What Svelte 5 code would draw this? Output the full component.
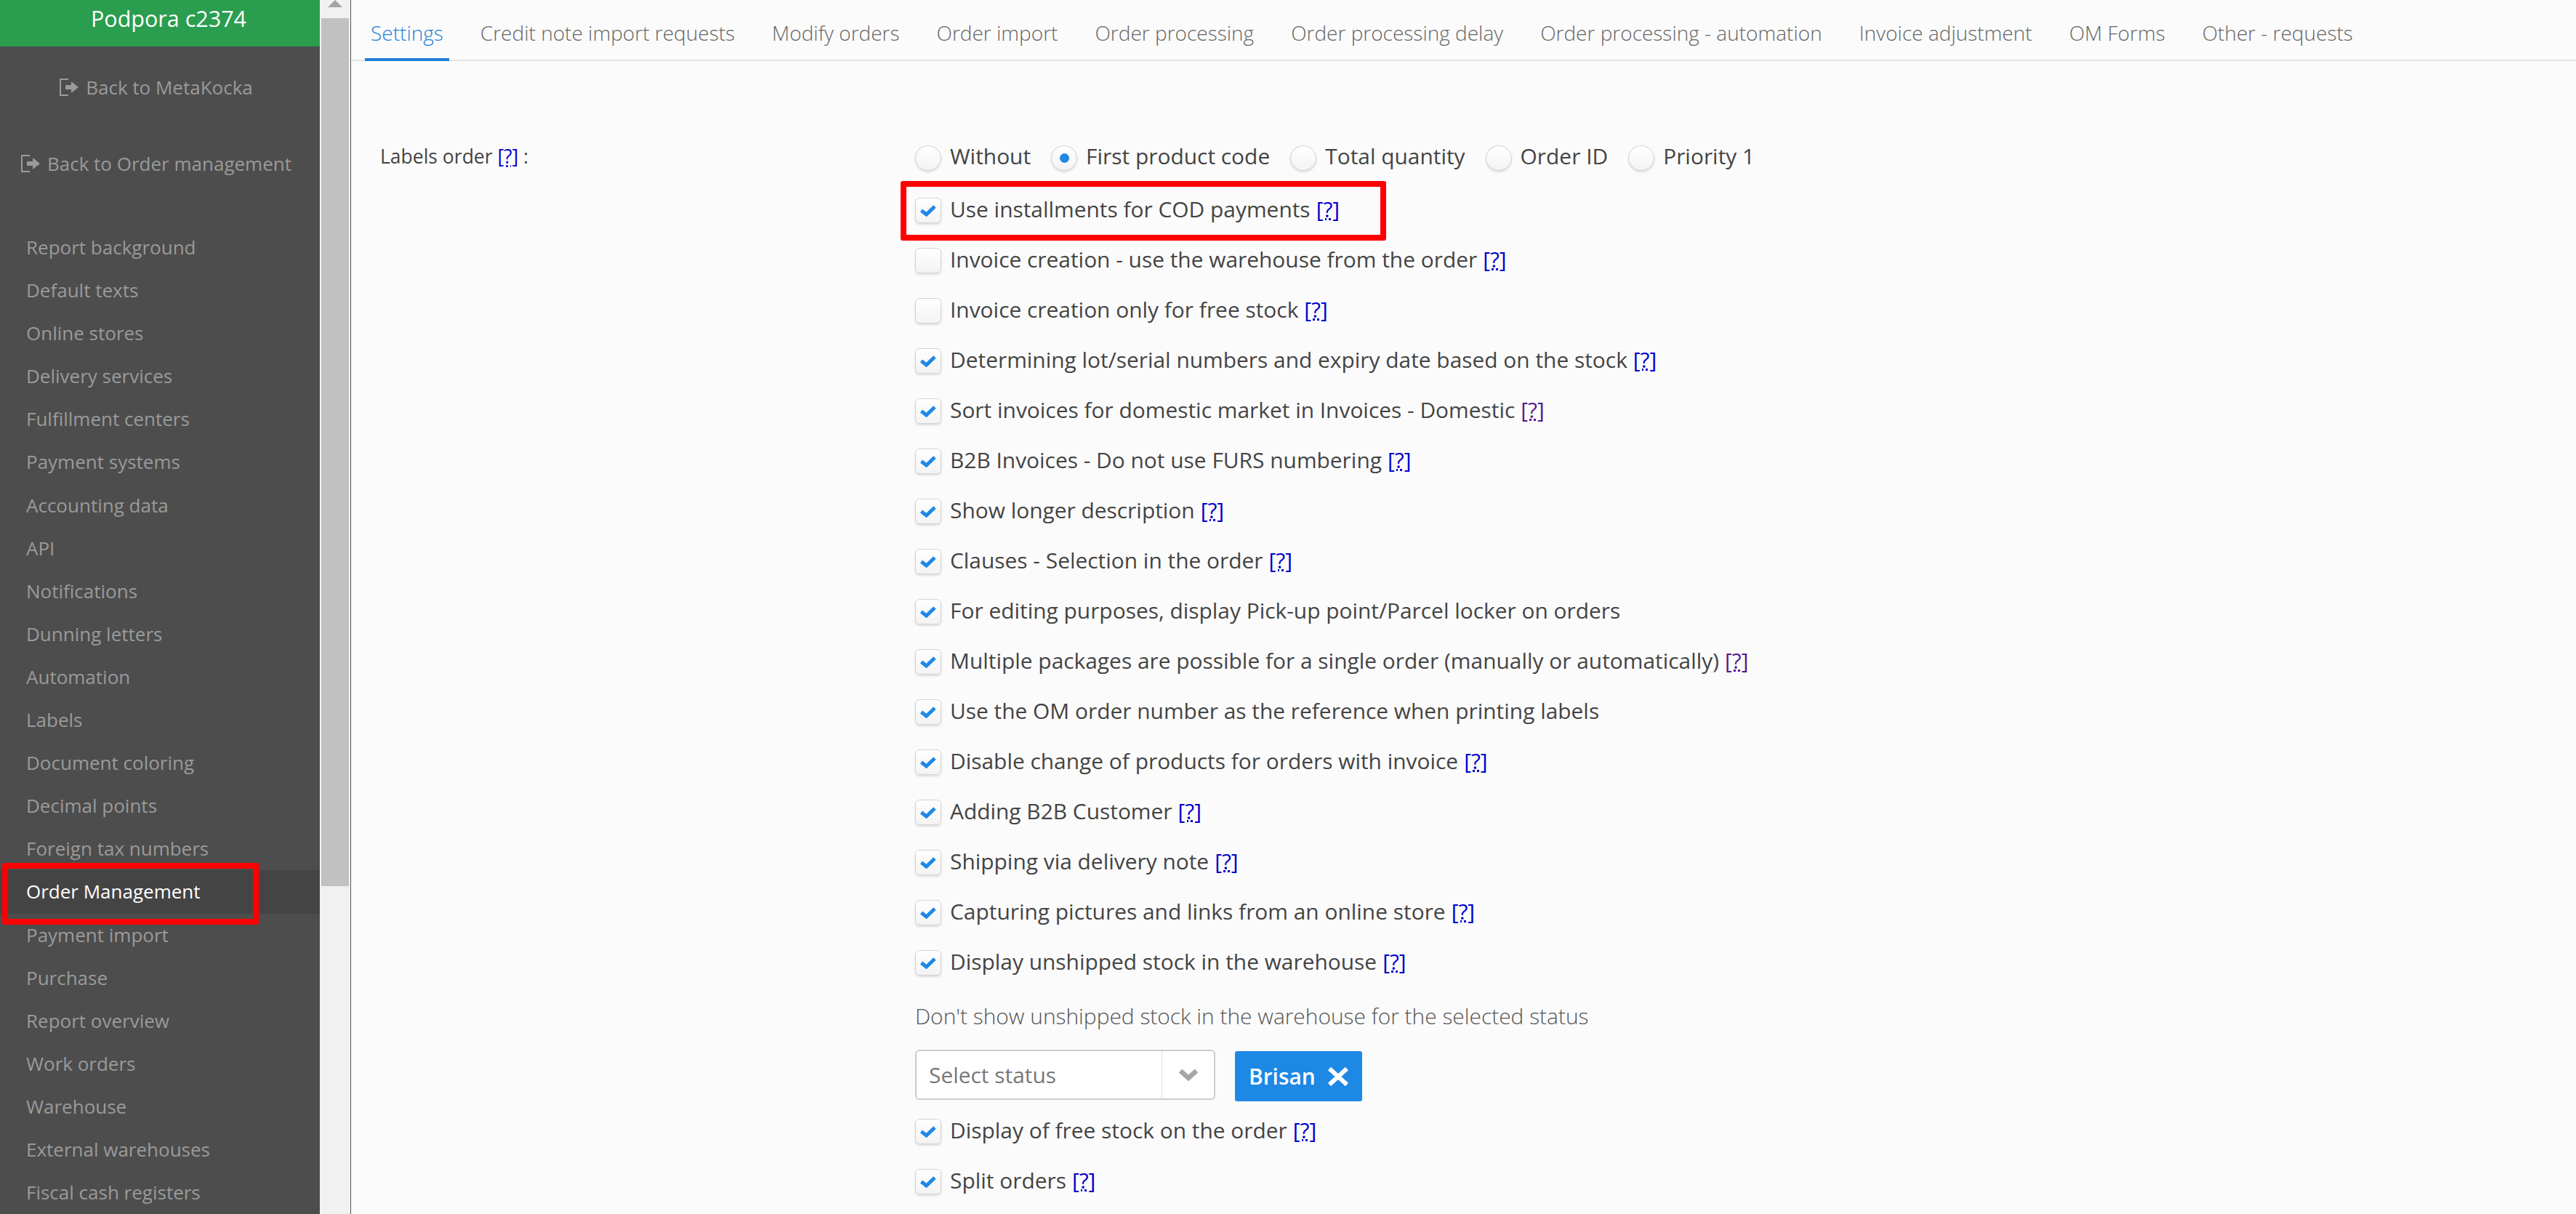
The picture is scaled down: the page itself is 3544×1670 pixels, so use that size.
<script>
  const menu = ["Report background","Default texts","Online stores","Delivery services","Fulfillment centers","Payment systems","Accounting data","API","Notifications","Dunning letters","Automation","Labels","Document coloring","Decimal points","Foreign tax numbers","Order Management","Payment import","Purchase","Report overview","Work orders","Warehouse","External warehouses","Fiscal cash registers"];
  const tabs = ["Settings","Credit note import requests","Modify orders","Order import","Order processing","Order processing delay","Order processing - automation","Invoice adjustment","OM Forms","Other - requests"];
  const radios = ["Without","First product code","Total quantity","Order ID","Priority 1"];
  // help: 0 none, 1 link, 2 visited link
  const first = [
    { t: "Use installments for COD payments", on: true, help: 1 },
    { t: "Invoice creation - use the warehouse from the order", on: false, help: 1 },
    { t: "Invoice creation only for free stock", on: false, help: 1 },
    { t: "Determining lot/serial numbers and expiry date based on the stock", on: true, help: 1 },
    { t: "Sort invoices for domestic market in Invoices - Domestic", on: true, help: 2 },
    { t: "B2B Invoices - Do not use FURS numbering", on: true, help: 1 },
    { t: "Show longer description", on: true, help: 1 },
    { t: "Clauses - Selection in the order", on: true, help: 1 },
    { t: "For editing purposes, display Pick-up point/Parcel locker on orders", on: true, help: 0 },
    { t: "Multiple packages are possible for a single order (manually or automatically)", on: true, help: 2 },
    { t: "Use the OM order number as the reference when printing labels", on: true, help: 0 },
    { t: "Disable change of products for orders with invoice", on: true, help: 1 },
    { t: "Adding B2B Customer", on: true, help: 1 },
    { t: "Shipping via delivery note", on: true, help: 1 },
    { t: "Capturing pictures and links from an online store", on: true, help: 1 },
    { t: "Display unshipped stock in the warehouse", on: true, help: 1 },
  ];
  const second = [
    { t: "Display of free stock on the order", on: true, help: 1 },
    { t: "Split orders", on: true, help: 1 },
  ];
</script>

{#snippet check(row)}
  <div class="row">
    <span class="box">
      {#if row.on}
        <svg viewBox="0 0 22 16" width="22" height="16"><path d="M1.5 7.5 L8.5 13 L20 2" fill="none" stroke="#1e88e5" stroke-width="5"/></svg>
      {/if}
    </span>
    <span>{row.t}</span>
    {#if row.help}<a class="help" class:visited={row.help === 2} href="#top">[?]</a>{/if}
  </div>
{/snippet}

{#snippet exitIcon()}
  <svg class="exit" viewBox="0 0 27 24" width="27" height="24">
    <path d="M12 1 H1 V23 H12" fill="none" stroke="#9a9a9a" stroke-width="2"/>
    <path d="M8 9 H16 V4 L26 12 L16 20 V15 H8 Z" fill="#9a9a9a"/>
  </svg>
{/snippet}

<div class="page">
  <aside class="sidebar">
    <div class="brand">Podpora c2374</div>
    <a class="back first" href="#top">{@render exitIcon()}Back to MetaKocka</a>
    <a class="back second" href="#top">{@render exitIcon()}Back to Order management</a>
    <nav class="menu">
      {#each menu as item}
        <div class="item" class:active={item === "Order Management"}>{item}</div>
      {/each}
    </nav>
  </aside>

  <div class="scrollbar">
    <div class="arrow"></div>
    <div class="thumb"></div>
  </div>

  <main class="content">
    <div class="tabs">
      {#each tabs as tab, i}
        <div class="tab" class:current={i === 0}>{tab}</div>
      {/each}
    </div>

    <div class="form">
      <div class="label">Labels order <a class="help" href="#top">[?]</a> :</div>
      <div class="fields">
        <div class="row radios">
          {#each radios as r, i}
            <span class="radio-item">
              <span class="radio">{#if i === 1}<i></i>{/if}</span>{r}
            </span>
          {/each}
        </div>
        {#each first as row}
          {@render check(row)}
        {/each}
        <div class="hint">Don't show unshipped stock in the warehouse for the selected status</div>
        <div class="status">
          <div class="select">
            <span class="placeholder">Select status</span>
            <span class="caret">
              <svg viewBox="0 0 28 17" width="28" height="17"><path d="M3 3 L14 13 L25 3" fill="none" stroke="#a6a6a6" stroke-width="6.5"/></svg>
            </span>
          </div>
          <div class="tag">Brisan
            <svg viewBox="0 0 28 26" width="28" height="26"><path d="M2 2 L26 24 M26 2 L2 24" stroke="#fff" stroke-width="6"/></svg>
          </div>
        </div>
        {#each second as row}
          {@render check(row)}
        {/each}
      </div>
    </div>
  </main>

  <div class="mark mark-menu"></div>
  <div class="mark mark-check"></div>
</div>

<style>
  :global(body) {
    margin: 0;
    background: #fbfbfb;
  }

  .page {
    position: relative;
    display: flex;
    width: 3544px;
    height: 1670px;
    overflow: hidden;
    font-family: "Open Sans", sans-serif;
    color: #444;
  }

  a {
    text-decoration: none;
  }

  .sidebar {
    flex: none;
    width: 440px;
    background: #4d4d4d;
    color: #9a9a9a;
    font-size: 26px;
  }

  .brand {
    height: 64px;
    line-height: 50px;
    padding-left: 24px;
    text-align: center;
    background: #2a9d4e;
    color: #fff;
    font-size: 30.5px;
    box-sizing: border-box;
  }

  .back {
    display: flex;
    justify-content: center;
    align-items: center;
    gap: 9px;
    height: 36px;
    padding-right: 10px;
    color: #9a9a9a;
  }

  .back.first {
    margin-top: 38px;
  }

  .back.second {
    margin-top: 69px;
  }

  .menu {
    margin-top: 68px;
  }

  .item {
    height: 59.1px;
    line-height: 59px;
    padding-left: 36px;
  }

  .item.active {
    background: #444;
    color: #fff;
    font-weight: 500;
  }

  .scrollbar {
    flex: none;
    width: 43px;
    padding-left: 2px;
    box-sizing: border-box;
    background: #f1f1f1;
    border-right: 1px solid #555;
  }

  .arrow {
    width: 0;
    height: 0;
    margin-left: 9px;
    border: 10px solid transparent;
    border-top: 0;
    border-bottom-color: #a3a3a3;
  }

  .thumb {
    width: 38px;
    height: 1194px;
    margin-top: 15px;
    background: #c1c1c1;
  }

  .content {
    flex: 1;
    min-width: 0;
    font-size: 29.9px;
  }

  .tabs {
    display: flex;
    height: 84px;
    padding-left: 19px;
    border-bottom: 2px solid #e3e3e3;
    box-sizing: border-box;
    font-size: 28px;
    font-weight: 300;
    color: #666;
  }

  .tab {
    height: 82px;
    line-height: 90px;
    padding: 0 8px;
    margin-right: 35px;
    white-space: nowrap;
  }

  .tab.current {
    height: 84px;
    box-sizing: border-box;
    color: #1e7fd8;
    border-bottom: 4px solid #1e7fd8;
  }

  .form {
    display: flex;
    padding-left: 40px;
  }

  .label {
    width: 736px;
    padding-top: 110px;
    line-height: 42px;
    font-size: 26.5px;
  }

  .fields {
    padding-top: 112px;
  }

  .row {
    display: flex;
    align-items: center;
    gap: 8px;
    height: 69px;
    padding-bottom: 5px;
    box-sizing: border-box;
    white-space: nowrap;
  }

  .radios {
    height: 42px;
    margin-bottom: 17px;
    gap: 28px;
  }

  .radio-item {
    display: flex;
    align-items: center;
    gap: 12px;
  }

  .radio,
  .box {
    flex: none;
    display: flex;
    align-items: center;
    justify-content: center;
    width: 36px;
    height: 35px;
    margin-top: 5px;
    border: 1px solid #d4d4d4;
    box-sizing: border-box;
    background: linear-gradient(#fff, #f3f3f3);
    box-shadow: 0 2px 3px rgba(0, 0, 0, 0.12);
  }

  .box {
    margin-right: 4px;
    border-radius: 6px;
  }

  .radio {
    border-radius: 50%;
  }

  .radio i {
    width: 13px;
    height: 13px;
    border-radius: 50%;
    background: #1e88e5;
  }

  .help {
    color: #0000cc;
    text-decoration: underline dotted;
  }

  .help.visited {
    color: #551a8b;
  }

  .hint {
    height: 78px;
    line-height: 78px;
    font-weight: 300;
    color: #555;
  }

  .status {
    display: flex;
    align-items: flex-start;
    gap: 27px;
    height: 78px;
    padding-top: 7px;
  }

  .select {
    display: flex;
    width: 413px;
    height: 69px;
    background: #fff;
    border: 2px solid #ccc;
    border-radius: 6px;
    box-sizing: border-box;
  }

  .placeholder {
    flex: 1;
    line-height: 65px;
    padding-left: 17px;
    color: #777;
  }

  .caret {
    display: flex;
    align-items: center;
    justify-content: center;
    width: 71px;
    border-left: 1px solid #ddd;
  }

  .tag {
    display: flex;
    align-items: center;
    gap: 17px;
    width: 175px;
    height: 69px;
    margin-top: 2px;
    padding-left: 19px;
    box-sizing: border-box;
    border-radius: 3px;
    background: #1e88e5;
    color: #fff;
    font-weight: 600;
  }

  .mark {
    position: absolute;
    border: 8px solid #f00;
    border-radius: 3px;
    box-sizing: border-box;
  }

  .mark-menu {
    left: 3px;
    top: 1187px;
    width: 353px;
    height: 85px;
  }

  .mark-check {
    left: 1239px;
    top: 249px;
    width: 668px;
    height: 82px;
  }
</style>
